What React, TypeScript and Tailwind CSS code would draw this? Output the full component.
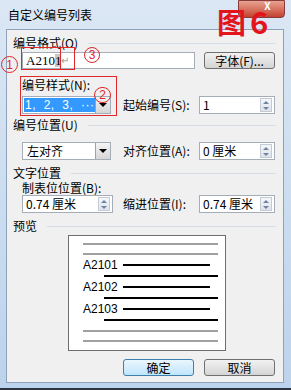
import React from 'react';

const cjk = "font-['Noto_Sans_CJK_SC','Liberation_Sans',sans-serif]";

function SectionLabel({ text, mt }: { text: string; mt: string }) {
  return (
    <div className={`flex items-center pl-[6px] pr-[7px] h-[12px] ${mt}`}>
      <span className="text-[12px] leading-[12px] whitespace-nowrap">{text}</span>
      <div className="flex-1 h-px bg-[#d5dde6] ml-[10px]" />
    </div>
  );
}

function Spin({ value, w }: { value: string; w: string }) {
  return (
    <div className={`${w} h-[18px] flex items-center bg-white border border-[#a4adb8]`}>
      <span className="flex-1 pl-[3px] text-[12px] leading-[12px] whitespace-nowrap">{value}</span>
      <div className="w-[12px] h-[14px] mr-[2px] flex flex-col border border-[#c4cbd4] bg-gradient-to-b from-[#f5f7fa] to-[#dde3ea]">
        <div className="flex-1 flex items-center justify-center">
          <div className="w-0 h-0 border-l-[3px] border-r-[3px] border-b-[3px] border-l-transparent border-r-transparent border-b-[#6f83a3]" />
        </div>
        <div className="flex-1 flex items-center justify-center">
          <div className="w-0 h-0 border-l-[3px] border-r-[3px] border-t-[3px] border-l-transparent border-r-transparent border-t-[#6f83a3]" />
        </div>
      </div>
    </div>
  );
}

function Select({ children }: { children: React.ReactNode }) {
  return (
    <div className="w-[89px] h-[18px] flex items-center bg-white border border-[#a4adb8]">
      <div className="flex-1 h-full flex items-center pl-[1px] overflow-hidden">{children}</div>
      <div className="w-[15px] h-[16px] flex items-center justify-center border-l border-[#9aa3ad] bg-gradient-to-b from-[#f4f4f4] to-[#d6d6d6]">
        <div className="w-0 h-0 border-l-[4px] border-r-[4px] border-t-[4px] border-l-transparent border-r-transparent border-t-black" />
      </div>
    </div>
  );
}

function Button({ label, focused }: { label: string; focused?: boolean }) {
  return (
    <div
      className={`w-[71px] h-[17px] flex items-center justify-center rounded-[3px] text-[12px] leading-[12px] border ${
        focused
          ? 'border-[#3c7fb1] bg-gradient-to-b from-[#eaf6fd] to-[#bee6fd]'
          : 'border-[#707070] bg-gradient-to-b from-[#f2f2f2] to-[#d4d4d4]'
      }`}
    >
      {label}
    </div>
  );
}

function CircleNum({ n, cls }: { n: string; cls: string }) {
  return (
    <div className={`absolute rounded-full border-[1.5px] border-[#e0282a] text-[#e0282a] flex items-center justify-center text-[12px] leading-none font-['Liberation_Sans',sans-serif] ${cls}`}>
      {n}
    </div>
  );
}

export default function App() {
  return (
    <div className={`relative w-[291px] h-[390px] overflow-hidden flex flex-col bg-gradient-to-b from-[#dbe7f4] to-[#bcd3ec] text-black ${cjk}`}>
      {/* title bar */}
      <div className="h-[29px] flex items-start">
        <span className="pl-[8px] pt-[9px] text-[12px] leading-[12px]">自定义编号列表</span>
        <div className="ml-auto mr-[6px] w-[47px] h-[18px] rounded-b-[4px] border border-[#8a3b3b] bg-gradient-to-b from-[#e8a291] to-[#c2412f] flex items-start justify-center pl-[12px] text-white text-[10px] leading-[10px] font-bold">
          X
        </div>
      </div>

      {/* panel */}
      <div className="ml-[6px] mr-[7px] h-[354px] flex flex-col bg-[#f0f0f0] border border-[#8ea2bc]">
        <SectionLabel text="编号格式(O)" mt="mt-[7px]" />
        <div className="flex pl-[15px] mt-[3px] h-[17px]">
          <div className="w-[173px] h-[17px] flex items-center bg-white border border-[#a4adb8] pl-[3px] text-[13px] leading-[13px] font-['Liberation_Serif',serif]">
            <span>A210</span>
            <span className="bg-[#c8c8c8]">1</span>
            <span className="text-[#9a9a9a] text-[10px]">↵</span>
          </div>
          <div className="ml-[9px]">
            <Button label="字体(F)..." />
          </div>
        </div>

        <div className="flex items-end pl-[15px] mt-[10px]">
          <div className="flex flex-col">
            <span className="text-[12px] leading-[12px] h-[12px] whitespace-nowrap">编号样式(N):</span>
            <div className="mt-[5px]">
              <Select>
                <span className="bg-[#3399ff] text-white text-[12px] leading-[14px] h-[14px] w-[71px] shrink-0 pl-[1px] whitespace-pre tracking-[0.5px] font-['Liberation_Sans',sans-serif]">1,  2,  3,  ···</span>
              </Select>
            </div>
          </div>
          <div className="ml-[12px] w-[76px] h-[18px] flex items-center text-[12px] leading-[12px] whitespace-nowrap">起始编号(S):</div>
          <Spin value="1" w="w-[76px]" />
        </div>

        <SectionLabel text="编号位置(U)" mt="mt-[5px]" />
        <div className="flex items-center pl-[15px] mt-[11px]">
          <Select>
            <span className="pl-[3px] text-[12px] leading-[12px]">左对齐</span>
          </Select>
          <div className="ml-[12px] w-[76px] text-[12px] leading-[12px] whitespace-nowrap">对齐位置(A):</div>
          <Spin value="0 厘米" w="w-[76px]" />
        </div>

        <SectionLabel text="文字位置" mt="mt-[7px]" />
        <div className="pl-[15px] mt-[3px] text-[12px] leading-[12px] h-[12px]">制表位位置(B):</div>
        <div className="flex items-center pl-[15px] mt-[1px]">
          <Spin value="0.74 厘米" w="w-[91px]" />
          <div className="ml-[10px] w-[76px] text-[12px] leading-[12px] whitespace-nowrap">缩进位置(I):</div>
          <Spin value="0.74 厘米" w="w-[76px]" />
        </div>

        <SectionLabel text="预览" mt="mt-[7px]" />
        <div className="ml-[61px] mt-[3px] w-[158px] h-[116px] bg-white border border-[#6e6e6e] flex flex-col pl-[14px] font-['Liberation_Sans',sans-serif]">
          <div className="mt-[7px] w-[135px] h-[2px] bg-[#a0a0a0]" />
          <div className="mt-[8px] w-[135px] h-[2px] bg-[#a0a0a0]" />
          {['A2101', 'A2102', 'A2103'].map((t) => (
            <div key={t} className="flex flex-col">
              <div className="mt-[4px] h-[12px] flex items-center">
                <span className="text-[12px] leading-[12px] w-[40px]">{t}</span>
                <div className="w-[87px] h-[2px] bg-black" />
              </div>
              <div className="mt-[4px] ml-[21px] w-[114px] h-[2px] bg-black" />
            </div>
          ))}
          <div className="mt-[9px] w-[135px] h-[2px] bg-[#a0a0a0]" />
          <div className="mt-[8px] w-[135px] h-[2px] bg-[#a0a0a0]" />
        </div>

        <div className="flex gap-[10px] pl-[116px] mt-[8px]">
          <Button label="确定" focused />
          <Button label="取消" />
        </div>
      </div>
      <div className="flex-1 border-b-[2px] border-[#2a3440]" />

      {/* annotations */}
      <div className="absolute left-[217px] top-[6px] flex items-end text-[#e3141c] font-bold">
        <span className="text-[29px] leading-[30px]">图</span>
        <span className="ml-[4px] text-[31px] leading-[30px]">6</span>
      </div>
      <div className="absolute left-[21px] top-[47px] w-[54px] h-[23px] border border-[#e0282a]" />
      <div className="absolute left-[60px] top-[47px] w-px h-[23px] bg-[#e0282a]" />
      <CircleNum n="1" cls="left-[1px] top-[56px] w-[17px] h-[17px]" />
      <CircleNum n="3" cls="left-[84px] top-[47px] w-[16px] h-[16px]" />
      <div className="absolute left-[20px] top-[76px] w-[97px] h-[40px] border border-[#e0282a]" />
      <CircleNum n="2" cls="left-[94px] top-[87px] w-[17px] h-[16px]" />
    </div>
  );
}
